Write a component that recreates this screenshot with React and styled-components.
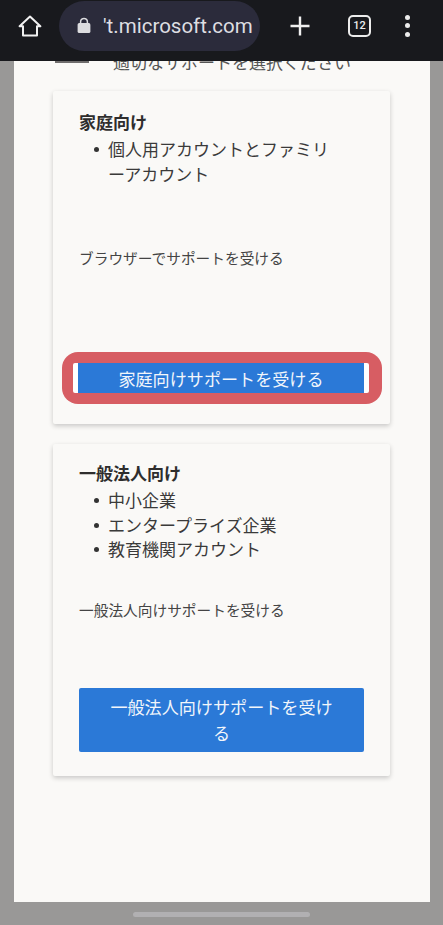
import styled, { createGlobalStyle } from 'styled-components';

const GlobalStyle = createGlobalStyle`
  html, body {
    margin: 0;
    padding: 0;
    background: #999897;
  }
  * {
    box-sizing: border-box;
  }
`;

const App = () => {
  return (
    <Screen>
      <GlobalStyle />
      <TopBar>
        <HomeIcon viewBox="0 0 24 24">
          <path d="M12 2.6 L22.4 12.2 H19 V21.6 H5 V12.2 H1.6 Z" />
        </HomeIcon>
        <UrlPill>
          <LockIcon viewBox="0 0 14 16">
            <path d="M3.6 6 V4.3 a3.4 3.4 0 0 1 6.8 0 V6" fill="none" stroke="#dcdcdf" strokeWidth="1.5" />
            <rect x="0.6" y="5.6" width="12.8" height="10" rx="1.6" fill="#dcdcdf" />
          </LockIcon>
          <UrlText>'t.microsoft.com</UrlText>
        </UrlPill>
        <PlusIcon viewBox="0 0 20 20">
          <path d="M10 0.5 V19.5 M0.5 10 H19.5" />
        </PlusIcon>
        <TabCount>12</TabCount>
        <MenuDots>
          <Dot />
          <Dot />
          <Dot />
        </MenuDots>
      </TopBar>
      <Page>
        <Intro>
          <IntroMark />
          <IntroText>適切なサポートを選択ください</IntroText>
        </Intro>
        <Card $height={333} $top={19}>
          <CardTitle>家庭向け</CardTitle>
          <BulletList>
            <li>個人用アカウントとファミリーアカウント</li>
          </BulletList>
          <CardNote $top={62}>ブラウザーでサポートを受ける</CardNote>
          <Highlight>
            <BlueButton $inner>家庭向けサポートを受ける</BlueButton>
          </Highlight>
        </Card>
        <Card $height={332} $top={17}>
          <CardTitle>一般法人向け</CardTitle>
          <BulletList>
            <li>中小企業</li>
            <li>エンタープライズ企業</li>
            <li>教育機関アカウント</li>
          </BulletList>
          <CardNote $top={38}>一般法人向けサポートを受ける</CardNote>
          <BlueButton>一般法人向けサポートを受ける</BlueButton>
        </Card>
      </Page>
      <HomeBar />
    </Screen>
  );
};

const FONT = `"Noto Sans CJK JP", "Noto Sans", sans-serif`;

const Screen = styled.div`
  width: 443px;
  height: 925px;
  overflow: hidden;
  display: flex;
  flex-direction: column;
  align-items: center;
  background: #999897;
  font-family: ${FONT};
`;

const TopBar = styled.div`
  width: 100%;
  height: 61px;
  flex: none;
  display: flex;
  align-items: center;
  padding: 0 0 10px 18px;
  background: #18191d;
`;

const HomeIcon = styled.svg`
  width: 24px;
  height: 24px;
  flex: none;
  fill: none;
  stroke: #f1f1f1;
  stroke-width: 2;
  stroke-linejoin: round;
`;

const UrlPill = styled.div`
  width: 201px;
  height: 50px;
  margin-left: 17px;
  padding-left: 18px;
  flex: none;
  display: flex;
  align-items: center;
  border-radius: 25px;
  background: #2b2b3b;
  overflow: hidden;
`;

const LockIcon = styled.svg`
  width: 14px;
  height: 17px;
  flex: none;
`;

const UrlText = styled.span`
  margin-left: 12px;
  font-family: Roboto, sans-serif;
  font-size: 20.5px;
  color: #dedee2;
  white-space: nowrap;
`;

const PlusIcon = styled.svg`
  width: 20px;
  height: 20px;
  margin-left: 30px;
  flex: none;
  fill: none;
  stroke: #f0f0f0;
  stroke-width: 2.4;
`;

const TabCount = styled.div`
  width: 23px;
  height: 22px;
  margin-left: 38px;
  flex: none;
  display: flex;
  align-items: center;
  justify-content: center;
  border: 2px solid #ececec;
  border-radius: 5px;
  font-family: Roboto, sans-serif;
  font-size: 11px;
  font-weight: 500;
  color: #ececec;
`;

const MenuDots = styled.div`
  margin-left: 34px;
  display: flex;
  flex-direction: column;
  gap: 3.5px;
`;

const Dot = styled.span`
  width: 5px;
  height: 5px;
  border-radius: 50%;
  background: #ececec;
`;

const Page = styled.div`
  width: 416px;
  height: 841px;
  flex: none;
  padding: 0 39.5px;
  background: #faf9f7;
  overflow: hidden;
`;

const Intro = styled.div`
  height: 38px;
  margin-top: -8px;
  position: relative;
`;

const IntroMark = styled.div`
  position: absolute;
  left: 2px;
  top: 8px;
  width: 34px;
  height: 2px;
  background: #6f6d6d;
`;

const IntroText = styled.div`
  position: absolute;
  left: 60px;
  top: 0;
  font-size: 17px;
  line-height: 18px;
  color: #555;
  white-space: nowrap;
`;

const Card = styled.div`
  width: 337px;
  height: ${(p) => p.$height}px;
  margin-bottom: 20px;
  padding: ${(p) => p.$top}px 26px 0;
  background: #faf9f7;
  border-radius: 2px;
  box-shadow: 0 2px 5px rgba(0, 0, 0, 0.2);
  &:last-child {
    margin-bottom: 0;
  }
`;

const CardTitle = styled.div`
  font-size: 17px;
  font-weight: 700;
  line-height: 24px;
  color: #2e2d2d;
`;

const BulletList = styled.ul`
  margin: 3px 0 0;
  padding: 0 24px 0 29px;
  list-style: none;
  font-size: 17px;
  line-height: 24.5px;
  line-break: loose;
  color: #3a3a3a;
  li {
    position: relative;
  }
  li::before {
    content: '';
    position: absolute;
    left: -14px;
    top: 10px;
    width: 5px;
    height: 5px;
    border-radius: 50%;
    background: #333;
  }
`;

const CardNote = styled.div`
  margin-top: ${(p) => p.$top}px;
  font-size: 14.7px;
  line-height: 20px;
  color: #444;
`;

const Highlight = styled.div`
  width: 320px;
  height: 52px;
  margin: 84px 0 0 -17px;
  padding: 11px;
  border-radius: 16px;
  background: #d75d63;
`;

const BlueButton = styled.div`
  display: flex;
  align-items: center;
  justify-content: center;
  text-align: center;
  width: ${(p) => (p.$inner ? '296px' : '285px')};
  min-height: ${(p) => (p.$inner ? '30px' : '64px')};
  margin-top: ${(p) => (p.$inner ? '0' : '68px')};
  padding: ${(p) => (p.$inner ? '1px 0 0' : '0 24px')};
  background: #2b79d7;
  border-radius: 2px;
  border-left: ${(p) => (p.$inner ? '5px solid #fff' : 'none')};
  border-right: ${(p) => (p.$inner ? '5px solid #fff' : 'none')};
  font-size: 17.1px;
  line-height: 26px;
  color: #f2f6fb;
`;

const HomeBar = styled.div`
  width: 177px;
  height: 5px;
  margin-top: 10px;
  flex: none;
  border-radius: 3px;
  background: #b1b0b2;
`;

export default App;
